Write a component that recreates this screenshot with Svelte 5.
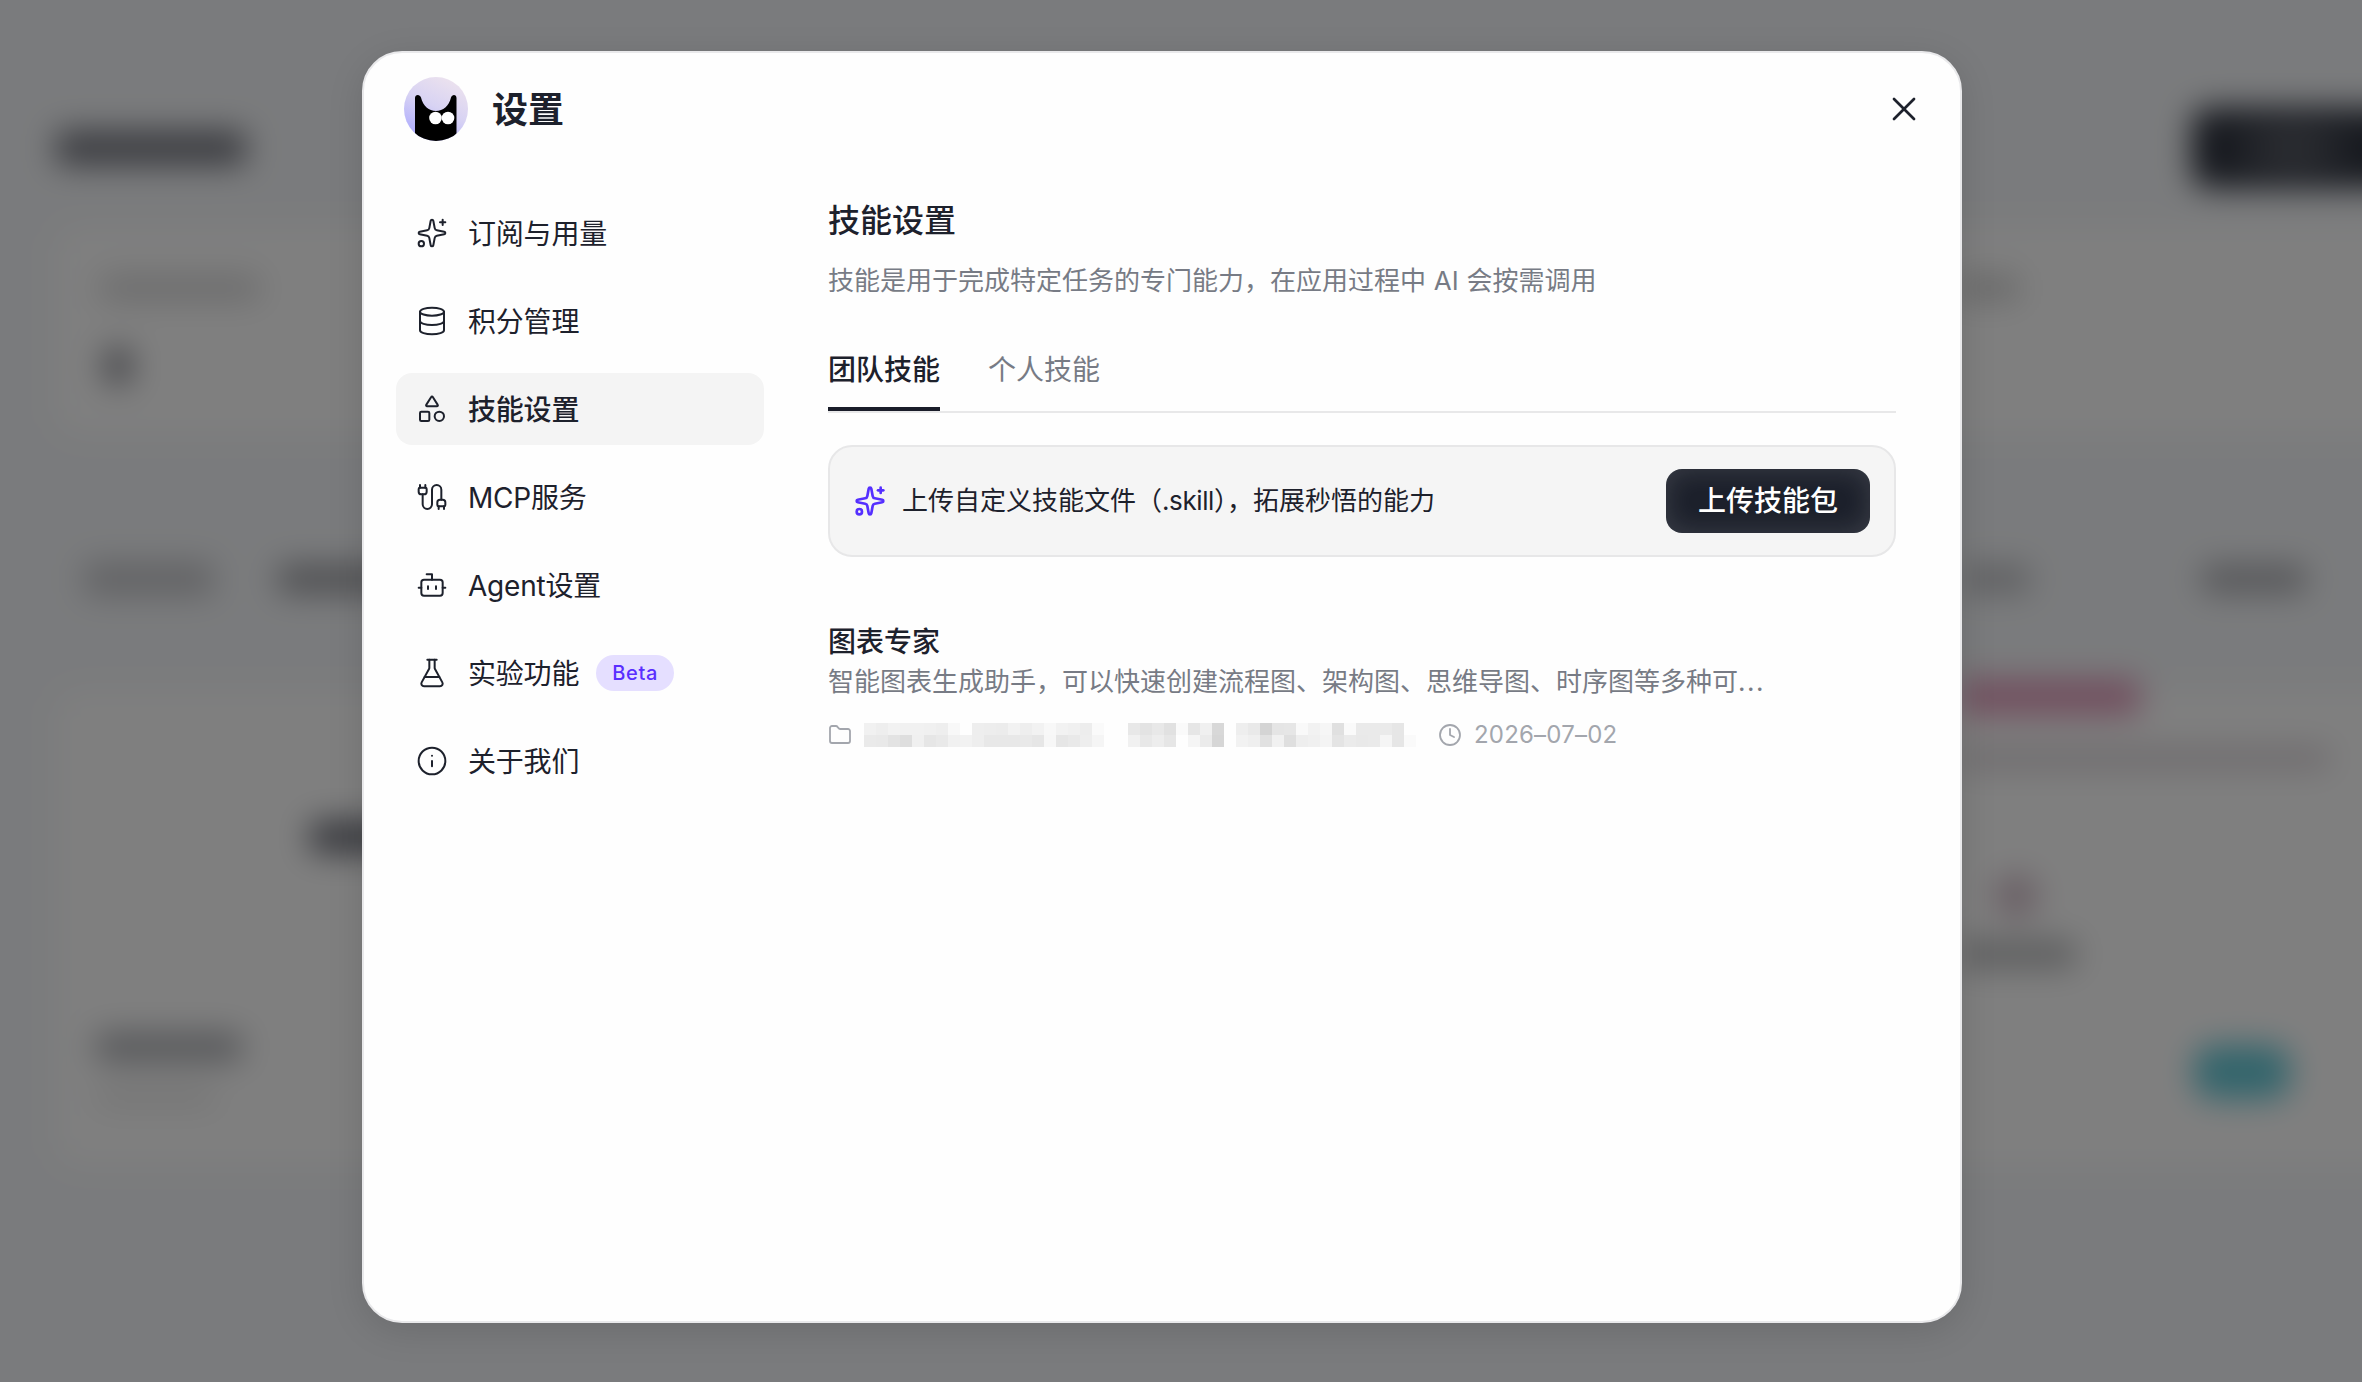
<script lang="ts">
    type MenuItem = { id: string; label: string; icon: string; badge?: string };

    const menu: MenuItem[] = [
        { id: 'plan', label: '订阅与用量', icon: 'sparkles' },
        { id: 'credits', label: '积分管理', icon: 'database' },
        { id: 'skills', label: '技能设置', icon: 'shapes' },
        { id: 'mcp', label: 'MCP服务', icon: 'cable' },
        { id: 'agent', label: 'Agent设置', icon: 'bot' },
        { id: 'labs', label: '实验功能', icon: 'flask', badge: 'Beta' },
        { id: 'about', label: '关于我们', icon: 'info' }
    ];

    const tabs = [
        { id: 'team', label: '团队技能' },
        { id: 'personal', label: '个人技能' }
    ];

    // 24x24 outline icons
    const icons: Record<string, string[]> = {
        sparkles: [
            'M11.017 2.814a1 1 0 0 1 1.966 0l1.051 5.558a2 2 0 0 0 1.594 1.594l5.558 1.051a1 1 0 0 1 0 1.966l-5.558 1.051a2 2 0 0 0-1.594 1.594l-1.051 5.558a1 1 0 0 1-1.966 0l-1.051-5.558a2 2 0 0 0-1.594-1.594l-5.558-1.051a1 1 0 0 1 0-1.966l5.558-1.051a2 2 0 0 0 1.594-1.594z',
            'M20 2v4',
            'M22 4h-4',
            'M2 20a2 2 0 1 0 4 0a2 2 0 1 0-4 0'
        ],
        database: [
            'M3 5a9 3 0 1 0 18 0a9 3 0 1 0-18 0',
            'M3 5V19A9 3 0 0 0 21 19V5',
            'M3 12A9 3 0 0 0 21 12'
        ],
        shapes: [
            'M8.3 10a.7.7 0 0 1-.626-1.079L11.4 3a.7.7 0 0 1 1.198-.043L16.3 8.9a.7.7 0 0 1-.572 1.1Z',
            'M4 14h5a1 1 0 0 1 1 1v5a1 1 0 0 1-1 1H4a1 1 0 0 1-1-1v-5a1 1 0 0 1 1-1z',
            'M14 17.5a3.5 3.5 0 1 0 7 0a3.5 3.5 0 1 0-7 0'
        ],
        cable: [
            'M17 19a1 1 0 0 1-1-1v-2a2 2 0 0 1 2-2h2a2 2 0 0 1 2 2v2a1 1 0 0 1-1 1z',
            'M17 21v-2',
            'M19 14V6.5a1 1 0 0 0-7 0v11a1 1 0 0 1-7 0V10',
            'M21 21v-2',
            'M3 5V3',
            'M4 10a2 2 0 0 1-2-2V6a1 1 0 0 1 1-1h4a1 1 0 0 1 1 1v2a2 2 0 0 1-2 2z',
            'M7 5V3'
        ],
        bot: [
            'M12 8V4H8',
            'M6 8h12a2 2 0 0 1 2 2v8a2 2 0 0 1-2 2H6a2 2 0 0 1-2-2v-8a2 2 0 0 1 2-2z',
            'M2 14h2',
            'M20 14h2',
            'M15 13v2',
            'M9 13v2'
        ],
        flask: [
            'M14 2v6a2 2 0 0 0 .245.96l5.51 10.08A2 2 0 0 1 18 22H6a2 2 0 0 1-1.755-2.96l5.51-10.08A2 2 0 0 0 10 8V2',
            'M6.453 15h11.094',
            'M8.5 2h7'
        ],
        info: ['M2 12a10 10 0 1 0 20 0a10 10 0 1 0-20 0', 'M12 16v-4', 'M12 8h.01'],
        folder: [
            'M20 20a2 2 0 0 0 2-2V8a2 2 0 0 0-2-2h-7.9a2 2 0 0 1-1.69-.9L9.6 3.9A2 2 0 0 0 7.93 3H4a2 2 0 0 0-2 2v13a2 2 0 0 0 2 2Z'
        ],
        clock: ['M2 12a10 10 0 1 0 20 0a10 10 0 1 0-20 0', 'M12 6v6l4 2'],
        close: ['M18 6 6 18', 'm6 6 12 12']
    };

    // masked skill path: one grey level per cell, two rows
    const mask = [
        'f1 ee f2 f1 f1 f0 ee f8 fe ee ed ec f2 ee f2 f8 f2 f0 ed fa fe fe e8 e3 e8 e1 fa e6 f0 d8 fe ee e9 d4 e5 e6 f9 f2 f6 e0 fa ea ea ea e6 fe',
        'ea e9 e3 de f0 e6 e9 f1 f2 ee e8 e8 e8 e9 e6 f7 e6 e9 ee f5 fe fe f1 e8 ed e6 fe f5 eb d6 fe f2 ef e1 f1 df ee f0 f4 e4 eb e9 ea f5 e6 fa'
    ].flatMap((row) => row.split(' '));

    let activeItem = $state('skills');
    let activeTab = $state('team');
</script>

{#snippet icon(name: string, size: number, stroke = 1.5)}
    <svg
        class="icon"
        width={size}
        height={size}
        viewBox="0 0 24 24"
        fill="none"
        stroke="currentColor"
        stroke-width={stroke}
        stroke-linecap="round"
        stroke-linejoin="round"
    >
        {#each icons[name] as d}
            <path {d} />
        {/each}
    </svg>
{/snippet}

<div class="screen">
    <div class="page" aria-hidden="true">
        <div class="page-head">
            <i class="smudge heading"></i>
            <i class="smudge action"></i>
        </div>
        <div class="panel stats">
            <div class="stat">
                <i class="smudge label"></i>
                <i class="smudge digit"></i>
            </div>
            <i class="smudge label-end"></i>
        </div>
        <div class="filters">
            <i class="smudge chip"></i>
            <i class="smudge chip-dark"></i>
            <i class="smudge filter-a"></i>
            <i class="smudge filter-b"></i>
        </div>
        <div class="works">
            <div class="panel work">
                <i class="smudge poster"></i>
                <i class="smudge name"></i>
                <i class="smudge meta"></i>
            </div>
            <div class="panel work tinted">
                <i class="smudge pink"></i>
                <i class="smudge strip"></i>
                <i class="smudge dot"></i>
                <i class="smudge caption"></i>
                <i class="smudge teal"></i>
            </div>
        </div>
    </div>

    <div class="overlay">
        <div class="modal" role="dialog" aria-label="设置">
            <header>
                <svg class="avatar" width="64" height="64" viewBox="0 0 64 64">
                    <defs>
                        <linearGradient id="sky" x1="0.7" y1="0" x2="0.2" y2="1">
                            <stop offset="0" stop-color="#ece2ee" />
                            <stop offset="0.45" stop-color="#d8d3f3" />
                            <stop offset="1" stop-color="#aaa8ff" />
                        </linearGradient>
                        <clipPath id="disc"><circle cx="32" cy="32" r="32" /></clipPath>
                    </defs>
                    <g clip-path="url(#disc)">
                        <rect width="64" height="64" fill="url(#sky)" />
                        <path
                            d="M11 64V21c0-4 5-4 6-.5C19 29 25 34 32 34s13-5 15-13.500c1-3.500 5.500-3.500 5.500.5v43z"
                            fill="#000"
                        />
                        <circle cx="31.500" cy="41" r="6.300" fill="#fff" />
                        <circle cx="44" cy="41" r="6.300" fill="#fff" />
                    </g>
                </svg>
                <h1>设置</h1>
                <button class="close" aria-label="关闭">{@render icon('close', 40, 1.6)}</button>
            </header>

            <div class="body">
                <nav>
                    {#each menu as item}
                        <button
                            class="menu-item"
                            class:active={activeItem === item.id}
                            onclick={() => (activeItem = item.id)}
                        >
                            {@render icon(item.icon, 32)}
                            <span class="menu-label">{item.label}</span>
                            {#if item.badge}
                                <span class="badge">{item.badge}</span>
                            {/if}
                        </button>
                    {/each}
                </nav>

                <main>
                    <h2>技能设置</h2>
                    <p class="subtitle">技能是用于完成特定任务的专门能力，在应用过程中 AI 会按需调用</p>

                    <div class="tabs">
                        {#each tabs as tab}
                            <button
                                class="tab"
                                class:active={activeTab === tab.id}
                                onclick={() => (activeTab = tab.id)}
                            >
                                {tab.label}
                            </button>
                        {/each}
                    </div>

                    <div class="upload">
                        <span class="spark">{@render icon('sparkles', 32, 2)}</span>
                        <span class="upload-text">上传自定义技能文件（<span class="ext">.skill</span>），拓展秒悟的能力</span>
                        <button class="primary">上传技能包</button>
                    </div>

                    <article class="skill">
                        <h3>图表专家</h3>
                        <p>智能图表生成助手，可以快速创建流程图、架构图、思维导图、时序图等多种可<span class="more">...</span></p>
                        <div class="skill-meta">
                            {@render icon('folder', 24, 1.8)}
                            <div class="mask">
                                {#each mask as level}
                                    <i style="background: #{level}{level}{level}"></i>
                                {/each}
                            </div>
                            {@render icon('clock', 24, 1.8)}
                            <span class="date">2026–07–02</span>
                        </div>
                    </article>
                </main>
            </div>
        </div>
    </div>
</div>

<style>
    :global(body) {
        background: #f5f7fa;
    }

    .screen {
        position: relative;
        width: 100%;
        height: 100vh;
        overflow: hidden;
        color: #1d212c;
        font-family: Inter, 'Noto Sans CJK SC', sans-serif;
    }

    h1,
    h2,
    h3,
    p {
        margin: 0;
    }

    button {
        border: none;
        background: none;
        padding: 0;
        color: inherit;
        font: inherit;
        cursor: pointer;
    }

    .icon {
        display: block;
        flex-shrink: 0;
    }

    /* page behind the dialog, bleeds past the window so the blur has no edge */
    .page {
        position: absolute;
        inset: -60px;
        padding: 168px 0 0 116px;
        background: #f5f7fa;
        filter: blur(16px);
    }

    .smudge {
        display: block;
        flex-shrink: 0;
        border-radius: 8px;
    }

    .page-head {
        display: flex;
        align-items: center;
        justify-content: space-between;
        height: 80px;
    }

    .heading {
        width: 190px;
        height: 34px;
        background: #74767f;
    }

    .action {
        width: 230px;
        height: 80px;
        border-radius: 16px 0 0 16px;
        background: radial-gradient(ellipse 80px 30px at 100px 40px, #70727a, #2c313d);
    }

    .panel {
        background: #fff;
        border-radius: 24px 0 0 24px;
    }

    .stats {
        display: flex;
        justify-content: space-between;
        height: 208px;
        margin-top: 38px;
        box-sizing: border-box;
        padding: 50px 0 0 44px;
    }

    .label {
        width: 160px;
        height: 24px;
        background: #d6d6d7;
    }

    .digit {
        width: 26px;
        height: 36px;
        margin: 48px 0 0 5px;
        background: #84858d;
    }

    .label-end {
        width: 464px;
        height: 24px;
        background: linear-gradient(90deg, #cecece 60px, transparent 60px);
    }

    .filters {
        display: flex;
        align-items: center;
        height: 60px;
        margin-top: 115px;
        padding-left: 28px;
    }

    .chip {
        width: 130px;
        height: 34px;
        background: #c6c7cb;
    }

    .chip-dark {
        width: 120px;
        height: 28px;
        margin-left: 64px;
        background: #9c9da2;
    }

    .filter-a {
        width: 68px;
        height: 28px;
        margin: 0 172px 0 auto;
        background: #bebfc3;
    }

    .filter-b {
        width: 104px;
        height: 28px;
        margin-right: 116px;
        background: #acadb2;
    }

    .works {
        display: flex;
        justify-content: space-between;
        margin-top: 82px;
    }

    .work {
        width: 1000px;
        height: 474px;
        box-sizing: border-box;
        padding: 130px 0 0 40px;
    }

    .poster {
        width: 200px;
        height: 32px;
        margin-left: 214px;
        background: #6e707a;
    }

    .name {
        width: 146px;
        height: 28px;
        margin-top: 180px;
        background: #abadb2;
    }

    .meta {
        width: 120px;
        height: 22px;
        margin-top: 24px;
        background: #ebebeb;
    }

    .tinted {
        width: 482px;
        padding: 0 0 0 20px;
        border-radius: 0;
    }

    .pink {
        width: 180px;
        height: 36px;
        margin-top: -12px;
        background: #e39cbc;
    }

    .strip {
        width: 370px;
        height: 22px;
        margin-top: 32px;
        background: #dcd5da;
    }

    .dot {
        width: 44px;
        height: 44px;
        margin: 105px 0 0 34px;
        border-radius: 50%;
        background: #d2bcc8;
    }

    .caption {
        width: 116px;
        height: 28px;
        margin-top: 22px;
        background: #b9babc;
    }

    .teal {
        width: 96px;
        height: 54px;
        margin: 77px 0 0 234px;
        border-radius: 20px;
        background: #66cad8;
    }

    /* dialog */
    .overlay {
        position: absolute;
        inset: 0;
        box-sizing: border-box;
        padding: 51px 0 0 362px;
        background: rgba(0, 0, 0, 0.5);
    }

    .modal {
        width: 1600px;
        height: 1272px;
        box-sizing: border-box;
        border: 2px solid #e9e9eb;
        border-radius: 40px;
        background: #fefefe;
        box-shadow: 0 8px 36px rgba(0, 0, 0, 0.12);
    }

    header {
        display: flex;
        align-items: center;
        height: 64px;
        padding: 24px 36px 0 40px;
    }

    h1 {
        margin-left: 24px;
        padding-top: 1px;
        font-size: 36px;
        line-height: 48px;
        font-weight: 600;
    }

    .close {
        margin-left: auto;
    }

    .body {
        display: flex;
        gap: 64px;
        padding: 56px 64px 0 32px;
    }

    nav {
        display: flex;
        flex-direction: column;
        gap: 16px;
        width: 368px;
        flex-shrink: 0;
    }

    .menu-item {
        display: flex;
        align-items: center;
        height: 72px;
        padding: 0 20px;
        border-radius: 16px;
        font-size: 28px;
        line-height: 40px;
    }

    .menu-item .icon {
        margin-right: 20px;
    }

    .menu-label {
        padding-top: 1px;
        letter-spacing: -0.2px;
    }

    .menu-item.active {
        background: #f4f4f4;
        font-weight: 500;
    }

    .badge {
        height: 36px;
        margin-left: 17px;
        padding: 0 16px;
        border-radius: 18px;
        background: #e5dfff;
        color: #5a2fff;
        font-size: 20px;
        line-height: 36px;
        font-weight: 500;
        letter-spacing: 0.7px;
    }

    main {
        flex: 1;
        min-width: 0;
    }

    h2 {
        font-size: 32px;
        line-height: 48px;
        font-weight: 500;
    }

    .subtitle {
        margin-top: 16px;
        color: #777b85;
        font-size: 26px;
        line-height: 40px;
        word-spacing: 0.5px;
    }

    .tabs {
        display: flex;
        gap: 48px;
        height: 74px;
        margin-top: 36px;
        border-bottom: 2px solid #e8e8e9;
    }

    .tab {
        display: flex;
        align-items: flex-start;
        height: 74px;
        box-sizing: border-box;
        padding-top: 13px;
        border-bottom: 4px solid transparent;
        color: #777b85;
        font-size: 28px;
        line-height: 40px;
    }

    .tab.active {
        border-bottom-color: #1a1d29;
        color: #1d212c;
        font-weight: 500;
    }

    .upload {
        display: flex;
        align-items: center;
        height: 112px;
        margin-top: 32px;
        box-sizing: border-box;
        padding: 0 24px;
        border: 2px solid #e7e7e8;
        border-radius: 24px;
        background: #f5f5f5;
    }

    .spark {
        color: #552fff;
    }

    .upload-text {
        margin-left: 16px;
        font-size: 26px;
        line-height: 40px;
    }

    .ext {
        letter-spacing: -0.4px;
    }

    .primary {
        width: 204px;
        height: 64px;
        margin-left: auto;
        border-radius: 16px;
        background: #1c202b;
        box-shadow: inset 0 0 28px rgba(255, 255, 255, 0.14);
        color: #fff;
        font-size: 28px;
        line-height: 62px;
        font-weight: 500;
    }

    .skill {
        margin-top: 65px;
    }

    h3 {
        font-size: 28px;
        line-height: 40px;
        font-weight: 500;
    }

    .skill p {
        color: #777b85;
        font-size: 26px;
        line-height: 40px;
        white-space: nowrap;
    }

    .more {
        letter-spacing: 1.5px;
    }

    .skill-meta {
        display: flex;
        align-items: center;
        height: 36px;
        margin-top: 15px;
        color: #a3a6ad;
    }

    .mask {
        display: grid;
        grid-template-columns: repeat(46, 12px);
        grid-auto-rows: 12px;
        margin: 0 22px 0 12px;
    }

    .date {
        margin-left: 12px;
        font-size: 24px;
        line-height: 36px;
        letter-spacing: 0.2px;
    }
</style>
